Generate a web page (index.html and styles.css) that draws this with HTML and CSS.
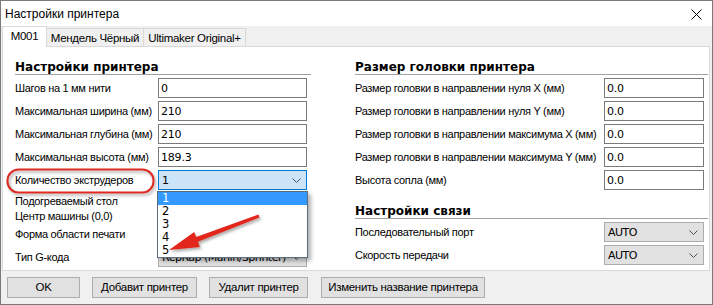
FILE: index.html
```html
<!DOCTYPE html>
<html lang="ru">
<head>
<meta charset="utf-8">
<title>Настройки принтера</title>
<link rel="stylesheet" href="styles.css">
</head>
<body>
<div class="window">
  <div class="titlebar">
    <span class="title">Настройки принтера</span>
    <svg class="close" width="11" height="11" viewBox="0 0 11 11"><path d="M0.5 0.5 L10.5 10.5 M10.5 0.5 L0.5 10.5" stroke="#000" stroke-width="1" fill="none"/></svg>
  </div>
  <div class="tabs">
    <div class="tab active t1">M001</div>
    <div class="tab t2">Мендель Чёрный</div>
    <div class="tab t3">Ultimaker Original+</div>
  </div>
  <div class="panel">
    <div class="col left">
      <div class="heading">Настройки принтера</div>
      <div class="row"><span class="label">Шагов на 1 мм нити</span><div class="input">0</div></div>
      <div class="row"><span class="label">Максимальная ширина (мм)</span><div class="input">210</div></div>
      <div class="row"><span class="label">Максимальная глубина (мм)</span><div class="input">210</div></div>
      <div class="row"><span class="label">Максимальная высота (мм)</span><div class="input">189.3</div></div>
      <div class="row">
        <span class="label">Количество экструдеров</span>
        <div class="combo focus"><span class="val">1</span><svg class="chev" width="9" height="5" viewBox="0 0 9 5"><path d="M0.5 0.5 L4.5 4.5 L8.5 0.5" stroke="#505050" fill="none"/></svg>
          <ul class="dropdown">
            <li class="sel">1</li>
            <li>2</li>
            <li>3</li>
            <li>4</li>
            <li>5</li>
          </ul>
        </div>
      </div>
      <div class="row check"><span class="label">Подогреваемый стол</span><span class="box"></span></div>
      <div class="row check"><span class="label">Центр машины (0,0)</span><span class="box"></span></div>
      <div class="row combo-row"><span class="label">Форма области печати</span><div class="combo"><svg class="chev" width="9" height="5" viewBox="0 0 9 5"><path d="M0.5 0.5 L4.5 4.5 L8.5 0.5" stroke="#505050" fill="none"/></svg></div></div>
      <div class="row"><span class="label">Тип G-кода</span><div class="combo"><span class="val">RepRap (Marlin/Sprinter)</span><svg class="chev" width="9" height="5" viewBox="0 0 9 5"><path d="M0.5 0.5 L4.5 4.5 L8.5 0.5" stroke="#505050" fill="none"/></svg></div></div>
    </div>
    <div class="col right">
      <div class="heading">Размер головки принтера</div>
      <div class="row"><span class="label">Размер головки в направлении нуля X (мм)</span><div class="input">0.0</div></div>
      <div class="row"><span class="label">Размер головки в направлении нуля Y (мм)</span><div class="input">0.0</div></div>
      <div class="row"><span class="label">Размер головки в направлении максимума X (мм)</span><div class="input">0.0</div></div>
      <div class="row"><span class="label">Размер головки в направлении максимума Y (мм)</span><div class="input">0.0</div></div>
      <div class="row"><span class="label">Высота сопла (мм)</span><div class="input">0.0</div></div>
      <div class="heading second">Настройки связи</div>
      <div class="row"><span class="label">Последовательный порт</span><div class="combo"><span class="val">AUTO</span><svg class="chev" width="9" height="5" viewBox="0 0 9 5"><path d="M0.5 0.5 L4.5 4.5 L8.5 0.5" stroke="#505050" fill="none"/></svg></div></div>
      <div class="row"><span class="label">Скорость передачи</span><div class="combo"><span class="val">AUTO</span><svg class="chev" width="9" height="5" viewBox="0 0 9 5"><path d="M0.5 0.5 L4.5 4.5 L8.5 0.5" stroke="#505050" fill="none"/></svg></div></div>
    </div>
  </div>
  <div class="buttons">
    <button class="btn b-ok">OK</button>
    <button class="btn b-add">Добавит принтер</button>
    <button class="btn b-del">Удалит принтер</button>
    <button class="btn b-ren">Изменить название принтера</button>
  </div>
  <svg class="annot" width="713" height="305" viewBox="0 0 713 305">
    <defs>
      <filter id="sh" x="-20%" y="-20%" width="140%" height="160%">
        <feDropShadow dx="1.5" dy="2" stdDeviation="1.5" flood-color="#000" flood-opacity="0.35"/>
      </filter>
    </defs>
    <rect x="7.5" y="169.5" width="146" height="23" rx="11" ry="11" fill="none" stroke="#dc2a22" stroke-width="2" filter="url(#sh)"/>
    <polygon points="169,250 199.9,246.9 197.9,241.7 259.5,217.4 258.5,214.6 196.2,237.1 194.2,231.9" fill="#e2261e" filter="url(#sh)"/>
  </svg>
</div>
</body>
</html>
```

FILE: styles.css
```css
* { box-sizing: border-box; }

html, body {
  margin: 0;
  padding: 0;
  background: #ffffff;
}

.window {
  position: relative;
  width: 713px;
  height: 305px;
  border: 1px solid #7a7a7a;
  background: #f0f0f0;
  display: flex;
  flex-direction: column;
  font-family: "DejaVu Sans", sans-serif;
  font-size: 11px;
  color: #000;
  overflow: hidden;
}

.titlebar {
  height: 25px;
  flex: none;
  background: #fff;
  display: flex;
  align-items: center;
  padding-left: 4px;
  font-family: "Liberation Sans", Arial, sans-serif;
  font-size: 12px;
}

.close {
  margin-left: auto;
  margin-right: 10px;
  margin-top: 1px;
}

.tabs {
  height: 20px;
  flex: none;
  display: flex;
  align-items: flex-end;
  padding-left: 1px;
  font-family: "Liberation Sans", Arial, sans-serif;
  font-size: 11.5px;
  letter-spacing: -0.3px;
  position: relative;
  z-index: 2;
}

.tab {
  height: 18px;
  border: 1px solid #d9d9d9;
  border-bottom: none;
  background: #f0f0f0;
  display: flex;
  align-items: center;
  justify-content: center;
  margin-left: -1px;
  line-height: 16px;
  white-space: nowrap;
}

.tab.active {
  height: 21px;
  margin-left: 0;
  margin-bottom: -1px;
  background: #fff;
  padding-bottom: 2px;
}

.t1 { width: 45px; }
.t2 { width: 98px; }
.t3 { width: 103px; }

.panel {
  flex: none;
  margin-left: 1px;
  width: 708px;
  height: 225px;
  background: #fff;
  border: 1px solid #d9d9d9;
  display: flex;
  gap: 44px;
  padding: 13px 0 0 12px;
}

.col { display: flex; flex-direction: column; }
.left { width: 296px; }
.right { width: 353px; }

.heading {
  font-weight: bold;
  font-size: 12px;
  line-height: 14px;
  height: 15px;
  border-bottom: 1px solid #a0a0a0;
  margin-bottom: 3px;
}

.heading.second { margin-top: 11px; }

.row {
  display: flex;
  align-items: center;
  height: 20px;
  margin-bottom: 3px;
}

.row.check {
  height: 15px;
  margin-bottom: 0;
}

.row.combo-row { margin-top: 1px; }

.label {
  flex: none;
  white-space: nowrap;
  font-family: "Liberation Sans", Arial, sans-serif;
  font-size: 11px;
  letter-spacing: -0.3px;
}

.left .label { width: 143px; }
.right .label { width: 249px; }

.input, .combo {
  position: relative;
  height: 20px;
  border: 1px solid #7a7a7a;
  background: #fff;
  padding-left: 2px;
  display: flex;
  align-items: center;
  white-space: nowrap;
  letter-spacing: -0.2px;
}

.left .input, .left .combo { width: 149px; }
.right .input, .right .combo { width: 100px; }

.combo {
  background: #e1e1e1;
  border-color: #adadad;
  padding-left: 3px;
  letter-spacing: -0.5px;
}

.combo .chev {
  position: absolute;
  right: 5px;
  top: 7px;
}

.combo.focus {
  background: #cce4f7;
  border-color: #0078d7;
}

.box {
  width: 13px;
  height: 13px;
  border: 1px solid #333;
  background: #fff;
}

.dropdown {
  position: absolute;
  left: -2px;
  top: 20px;
  width: 151px;
  margin: 0;
  padding: 0;
  list-style: none;
  background: #fff;
  border: 1px solid #5a6e80;
  box-shadow: 3px 3px 4px rgba(0, 0, 0, 0.3);
  z-index: 5;
  font-size: 11.5px;
  letter-spacing: 0;
}

.dropdown li {
  height: 13px;
  line-height: 13px;
  padding-left: 4px;
}

.dropdown li.sel {
  background: #3399ff;
  color: #fff;
}

.buttons {
  flex: none;
  display: flex;
  gap: 12px;
  padding-left: 6px;
  margin-top: 6px;
}

.btn {
  height: 21px;
  border: 1px solid #adadad;
  background: #e1e1e1;
  font-family: "Liberation Sans", Arial, sans-serif;
  font-size: 11.5px;
  letter-spacing: -0.3px;
  color: #000;
  padding: 0;
  margin: 0;
  line-height: 17px;
  white-space: nowrap;
}

.b-ok { width: 73px; }
.b-add { width: 105px; }
.b-del { width: 99px; }
.b-ren { width: 164px; margin-left: 1px; }

.annot {
  position: absolute;
  left: -1px;
  top: -1px;
  pointer-events: none;
  z-index: 10;
}
```
